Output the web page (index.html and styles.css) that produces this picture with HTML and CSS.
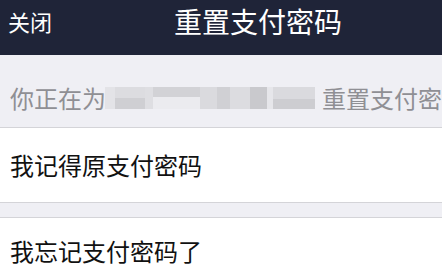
FILE: index.html
```html
<!DOCTYPE html>
<html lang="zh-CN">
<head>
<meta charset="utf-8">
<title>重置支付密码</title>
<link rel="stylesheet" href="styles.css">
</head>
<body>
<header class="navbar">
  <span class="nav-close">关闭</span>
  <span class="nav-title">重置支付密码</span>
</header>
<section class="notice">
  <span class="notice-text">你正在为</span>
  <span class="mask" aria-hidden="true">
    <i class="b1"></i><i class="b2"></i><i class="b3"></i><i class="b4"></i><i class="b5"></i><i class="b6"></i><i class="b7"></i><i class="b8"></i><i class="b9"></i>
  </span>
  <span class="notice-text tail">重置支付密码</span>
</section>
<div class="row first">我记得原支付密码</div>
<div class="spacer"></div>
<div class="row second">我忘记支付密码了</div>
</body>
</html>
```

FILE: styles.css
```css
* { box-sizing: border-box; margin: 0; padding: 0; }
html, body { width: 442px; height: 274px; overflow: hidden; }
body {
  background: #ffffff;
  font-family: "Noto Sans CJK SC", "Noto Sans", sans-serif;
  color: #111111;
}
.navbar {
  height: 55px;
  background: #1f2438;
  color: #ffffff;
  display: flex;
  align-items: center;
  padding: 0 0 13px 8px;
  white-space: nowrap;
}
.nav-close {
  font-size: 22px;
  line-height: 30px;
}
.nav-title {
  font-size: 28px;
  line-height: 34px;
  margin-left: 122px;
}
.notice {
  height: 73px;
  background: #efeff4;
  border-bottom: 1px solid #d4d4d8;
  display: flex;
  align-items: center;
  padding: 14px 0 0 10px;
  white-space: nowrap;
  overflow: hidden;
}
.notice-text {
  font-size: 24px;
  line-height: 30px;
  color: #8f8f94;
  flex: none;
}
.notice-text.tail { margin-left: 7px; }
.mask {
  display: flex;
  height: 22px;
  width: 210px;
  flex: none;
  margin-left: -1px;
}
.mask i { display: block; height: 100%; }
.mask .b1 { width: 10px; background: #e3e3e7; }
.mask .b2 { width: 30px; background: linear-gradient(#dcdce0 50%, #cfcfd3 50%); }
.mask .b3 { width: 8px; background: #dedee2; }
.mask .b4 { width: 47px; background: linear-gradient(#d2d2d6 45%, #ebebef 45%); }
.mask .b5 { width: 17px; background: #dadade; }
.mask .b6 { width: 33px; background: linear-gradient(90deg, #d0d0d4 40%, #dcdce0 40%); }
.mask .b7 { width: 17px; background: #c9c9cd; }
.mask .b8 { width: 6px; background: #e6e6ea; }
.mask .b9 { width: 42px; background: linear-gradient(#dadade 55%, #cdcdd1 55%); }
.row {
  background: #ffffff;
  font-size: 24px;
  line-height: 30px;
  padding-left: 10px;
  color: #111111;
  white-space: nowrap;
}
.row.first {
  height: 75px;
  padding-top: 22px;
  border-bottom: 1px solid #d4d4d8;
}
.spacer {
  height: 15px;
  background: #efeff4;
  border-bottom: 1px solid #d4d4d8;
}
.row.second {
  height: 56px;
  padding-top: 18px;
}
```
